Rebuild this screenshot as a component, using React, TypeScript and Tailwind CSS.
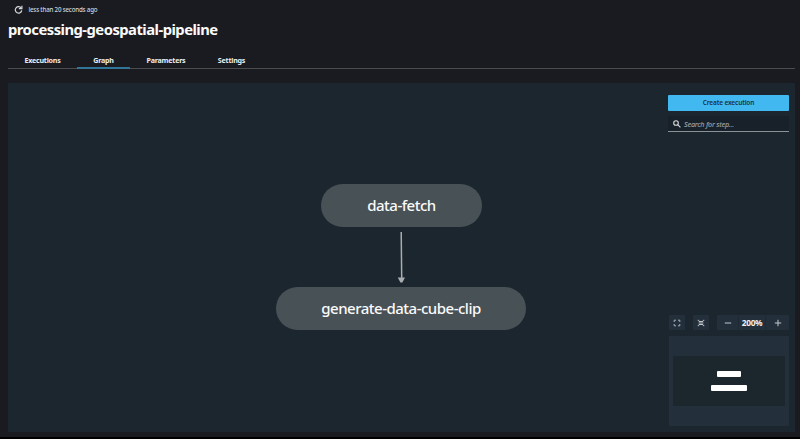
import type { ReactNode } from 'react';

const tabs = [
  { label: 'Executions', box: 'w-[69px]' },
  { label: 'Graph', box: 'w-[53px]' },
  { label: 'Parameters', box: 'w-[72px]' },
  { label: 'Settings', box: 'w-[59px]' },
];

function ToolButton({ label, children }: { label: string; children: ReactNode }) {
  return (
    <button aria-label={label} className="flex h-[15px] w-4 items-center justify-center bg-[#232f3b]">
      {children}
    </button>
  );
}

function Header() {
  return (
    <header className="h-[83px] pl-2">
      <div className="flex h-[19px] items-center pl-[6px]">
        <svg className="size-[9px]" viewBox="0 0 9 9" fill="none" stroke="#d6d9db" strokeWidth="1.2">
          <path d="M7.2 3.1A3.2 3.2 0 1 0 7.7 5.3" />
          <path d="M7.9 .7v3H4.9" />
        </svg>
        <span className="ml-[5.5px] text-[6.2px] leading-[9px] font-medium tracking-[-0.2px] text-[#d1d5db]">
          less than 20 seconds ago
        </span>
      </div>
      <h1 className="h-5 text-[14.8px] leading-5 font-bold tracking-[-0.53px] text-[#fafafa]">
        processing-geospatial-pipeline
      </h1>
      <nav className="mt-[13px] mr-[5px] flex h-[17px] border-b border-[#4c4c4f]">
        {tabs.map((t) => (
          <button
            key={t.label}
            className={`flex h-[17px] justify-center border-b-2 pt-[3px] text-[7.1px] leading-[11px] font-bold tracking-[-0.22px] text-[#eeeeef] ${t.box} ${
              t.label === 'Graph' ? 'border-[#2f7699]' : 'border-transparent'
            }`}
          >
            {t.label}
          </button>
        ))}
      </nav>
    </header>
  );
}

function GraphCanvas() {
  return (
    <>
      <div className="absolute top-[101px] left-[313px] flex h-[43px] w-[161px] items-center justify-center rounded-full bg-[#485156] text-[15px] font-medium tracking-[-0.5px] text-[#fafafa]">
        data-fetch
      </div>
      <svg className="absolute top-[149px] left-[389px] h-[52px] w-2" viewBox="0 0 8 52">
        <path d="M4.2 0L4.7 47" stroke="#a7adb0" strokeWidth="1.5" />
        <path d="M.8 45.5h7.2L5.4 50.5h-2z" fill="#a7adb0" />
      </svg>
      <div className="absolute top-[204px] left-[268px] flex h-[43px] w-[250px] items-center justify-center rounded-full bg-[#485156] text-[15px] font-medium tracking-[-0.5px] text-[#fafafa]">
        generate-data-cube-clip
      </div>
    </>
  );
}

function SidePanel() {
  return (
    <aside className="ml-auto flex w-[127px] flex-col pt-3 pr-[6px]">
      <button className="h-4 rounded-[1px] bg-[#42b8f0] text-[6.5px] leading-4 font-semibold tracking-[-0.13px] text-[#173345]">
        Create execution
      </button>
      <label className="mt-[5px] flex h-4 items-center border-b border-[#8a9298] bg-[#18212a] pl-[5px]">
        <svg className="size-2" viewBox="0 0 8 8" fill="none" stroke="#d5d9dc" strokeWidth="1.1">
          <circle cx="3" cy="3" r="2.3" />
          <path d="M4.7 4.7L7.4 7.4" />
        </svg>
        <span className="ml-[3px] pt-px text-[7.2px] font-medium tracking-[-0.25px] text-[#9aa2a8] italic">Search for step...</span>
      </label>
      <div className="mt-[183px] ml-px flex">
        <ToolButton label="Fit to screen">
          <svg className="size-2" viewBox="0 0 8 8" fill="none" stroke="#aab2b9" strokeWidth="1">
            <path d="M1.2 3V1.2H3M5 1.2h1.8V3M6.8 5v1.8H5M3 6.8H1.2V5" />
          </svg>
        </ToolButton>
        <div className="ml-2">
          <ToolButton label="Center graph">
            <svg className="size-2" viewBox="0 0 8 8" fill="none" stroke="#c2c7cb" strokeWidth="1">
              <path d="M1.2 .8v.9h1M6.8 .8v.9h-1M2 2.5h4M1.6 4h4.8M2 5.5h4M1.2 7.2v-.9h1M6.8 7.2v-.9h-1" />
            </svg>
          </ToolButton>
        </div>
        <div className="ml-2 flex h-[15px] grow bg-[#232f3b]">
          <button aria-label="Zoom out" className="flex w-[21px] items-center justify-center">
            <svg className="size-2" viewBox="0 0 8 8" stroke="#c3c8cc" strokeWidth="1">
              <path d="M.8 4h6.4" />
            </svg>
          </button>
          <span className="w-[28px] border-x border-[#1e2933] text-center text-[8.3px] leading-[15px] font-bold tracking-[-0.3px] text-[#f0f1f2]">
            200%
          </span>
          <button aria-label="Zoom in" className="flex grow items-center justify-center">
            <svg className="size-2" viewBox="0 0 8 8" stroke="#c3c8cc" strokeWidth="1">
              <path d="M.8 4h6.4M4 .8v6.4" />
            </svg>
          </button>
        </div>
      </div>
      <div className="mt-[6px] ml-px h-[90px] bg-[#232f3b] px-1 py-5">
        <div className="flex h-[50px] flex-col items-center bg-[#1c262d] pt-[15px]">
          <div className="h-[6px] w-6 rounded-[1px] bg-white" />
          <div className="mt-2 h-[6px] w-9 rounded-[1px] bg-white" />
        </div>
      </div>
    </aside>
  );
}

export default function App() {
  return (
    <div className="h-[439px] w-[800px] overflow-hidden border-b-2 border-black bg-[#1a1b20] font-['Noto_Sans','Open_Sans',sans-serif]">
      <Header />
      <main className="relative ml-2 flex h-[349px] w-[787px] bg-[#1c262e]">
        <GraphCanvas />
        <SidePanel />
      </main>
    </div>
  );
}
